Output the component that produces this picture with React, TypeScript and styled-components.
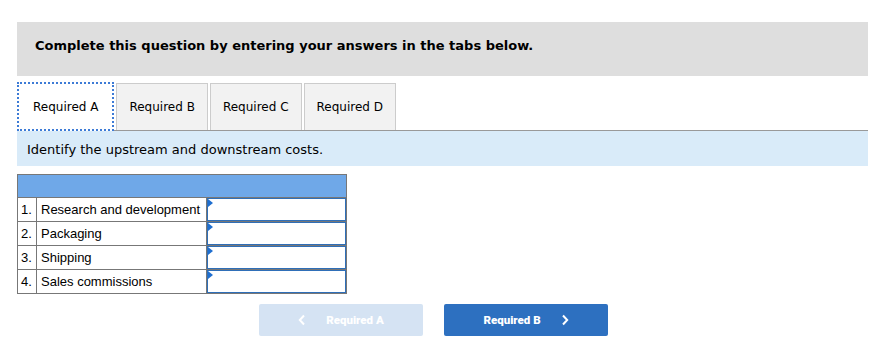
import { FC } from "react";
import styled, { createGlobalStyle } from "styled-components";

const GlobalStyle = createGlobalStyle`
  body {
    margin: 0;
    background: #fff;
    font-family: "DejaVu Sans", Verdana, sans-serif;
    color: #000;
  }
`;

const rows = ["Research and development", "Packaging", "Shipping", "Sales commissions"];
const tabs = ["Required A", "Required B", "Required C", "Required D"];

const Chevron: FC<{ dir: "left" | "right" }> = ({ dir }) => (
  <svg width="8" height="12" viewBox="0 0 8 12">
    <path
      d={dir === "left" ? "M6 1.5 L1.8 6 L6 10.5" : "M2 1.5 L6.2 6 L2 10.5"}
      fill="none"
      stroke="#fff"
      strokeWidth="2"
    />
  </svg>
);

export default function App() {
  return (
    <>
      <GlobalStyle />
      <Page>
        <Banner>Complete this question by entering your answers in the tabs below.</Banner>
        <TabBar>
          {tabs.map((t, i) => (
            <Tab key={t} active={i === 0}>
              {t}
            </Tab>
          ))}
        </TabBar>
        <Instruction>Identify the upstream and downstream costs.</Instruction>
        <Table>
          <thead>
            <tr>
              <HeadCell colSpan={3} />
            </tr>
          </thead>
          <tbody>
            {rows.map((r, i) => (
              <tr key={r}>
                <NumCell>{i + 1}.</NumCell>
                <LabelCell>{r}</LabelCell>
                <InputCell>
                  <InputBox>
                    <Marker />
                  </InputBox>
                </InputCell>
              </tr>
            ))}
          </tbody>
        </Table>
        <NavRow>
          <NavButton disabled>
            <Chevron dir="left" />
            Required A
          </NavButton>
          <NavButton>
            Required B
            <Chevron dir="right" />
          </NavButton>
        </NavRow>
      </Page>
    </>
  );
}

const Page = styled.div`
  padding: 22px 23px 0 17px;
`;

const Banner = styled.div`
  height: 54px;
  box-sizing: border-box;
  background: #dedede;
  padding: 0 0 7px 18px;
  display: flex;
  align-items: center;
  font-size: 13px;
  font-weight: bold;
`;

const TabBar = styled.div`
  display: flex;
  gap: 2px;
  margin-top: 6px;
  border-bottom: 1px solid #999;
  height: 48px;
`;

const Tab = styled.div<{ active?: boolean }>`
  box-sizing: border-box;
  height: ${(p) => (p.active ? "49px" : "47px")};
  margin-top: ${(p) => (p.active ? "0" : "1px")};
  display: flex;
  align-items: center;
  padding: 0 ${(p) => (p.active ? "14px" : "12px")};
  font-size: 12px;
  background: ${(p) => (p.active ? "#fff" : "#f2f2f2")};
  border: ${(p) => (p.active ? "2px dotted #3d7bd6" : "1px solid #ccc")};
  border-bottom: ${(p) => (p.active ? "2px dotted #3d7bd6" : "none")};
  position: relative;
  z-index: 1;
`;

const Instruction = styled.div`
  height: 35px;
  box-sizing: border-box;
  background: #d9ebf9;
  padding: 2px 0 0 10px;
  display: flex;
  align-items: center;
  font-size: 13px;
`;

const Table = styled.table`
  border-collapse: collapse;
  margin-top: 8px;
  width: 330px;
  font-family: "Liberation Sans", Arial, sans-serif;
  font-size: 13px;
`;

const HeadCell = styled.th`
  height: 22px;
  background: #6fa8e8;
  border: 1px solid #777;
  padding: 0;
`;

const NumCell = styled.td`
  width: 19px;
  height: 23px;
  border: 1px solid #777;
  padding: 0 0 0 3px;
  box-sizing: border-box;
`;

const LabelCell = styled.td`
  border: 1px solid #777;
  padding: 0 3px 0 4px;
  width: 170px;
  box-sizing: border-box;
  white-space: nowrap;
`;

const InputCell = styled.td`
  border: 1px solid #777;
  padding: 0;
`;

const InputBox = styled.div`
  position: relative;
  height: 23px;
  box-sizing: border-box;
  border: 1.5px solid #2f6fb8;
  background: #fff;
`;

const Marker = styled.span`
  position: absolute;
  left: 0;
  top: 0;
  width: 0;
  height: 0;
  border-top: 4px solid transparent;
  border-bottom: 4px solid transparent;
  border-left: 5px solid #1f6fd0;
`;

const NavRow = styled.div`
  display: flex;
  gap: 21px;
  margin-top: 10px;
  padding-left: 242px;
`;

const NavButton = styled.button`
  width: 164px;
  height: 32px;
  border: none;
  border-radius: 2px;
  background: ${(p) => (p.disabled ? "#d5e3f3" : "#2d70c0")};
  color: #fff;
  font-family: Roboto, "Liberation Sans", sans-serif;
  font-weight: 900;
  font-size: 11.5px;
  display: flex;
  align-items: center;
  justify-content: center;
  gap: 20px;
  padding: 0;
  cursor: pointer;
`;
